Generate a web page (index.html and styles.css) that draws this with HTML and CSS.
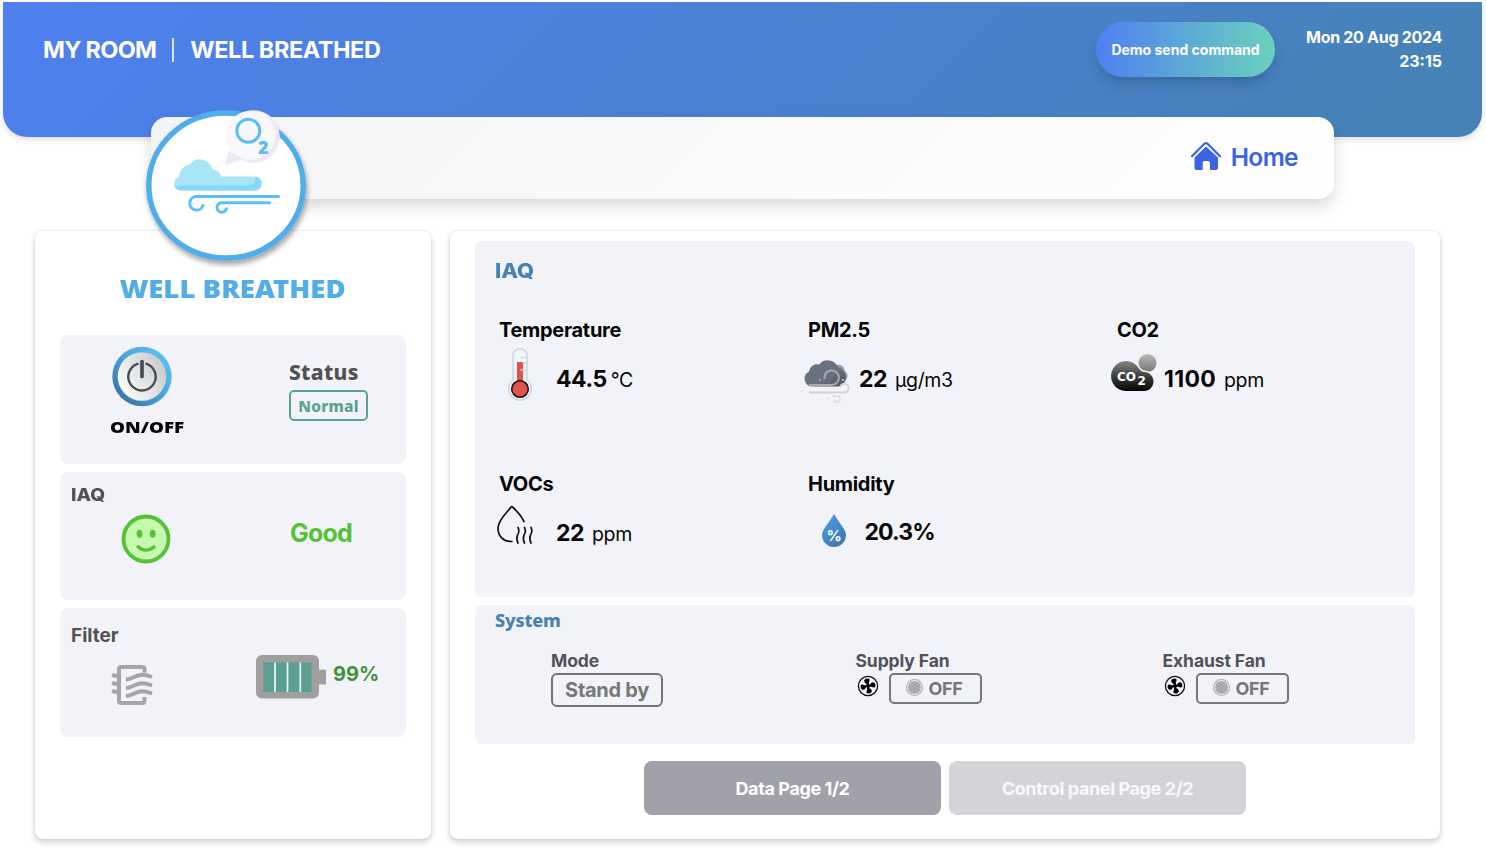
FILE: index.html
```html
<!DOCTYPE html>
<html lang="en">
<head>
<meta charset="utf-8">
<title>Well Breathed</title>
<link rel="stylesheet" href="styles.css">
</head>
<body>
<header class="top">
  <div class="crumbs"><span class="crumb-room">MY ROOM</span><i class="crumb-sep"></i><span class="crumb-page">WELL BREATHED</span></div>
  <button class="demo"><span>Demo send command</span></button>
  <div class="clock"><div>Mon 20 Aug 2024</div><div class="time">23:15</div></div>
</header>

<nav class="subbar">
  <svg class="logo" viewBox="0 0 180 170">
    <defs>
      <filter id="drop" x="-10%" y="-10%" width="120%" height="125%"><feDropShadow dx="1.5" dy="4" stdDeviation="2.5" flood-opacity=".35"/></filter>
    </defs>
    <g transform="translate(10 11)">
      <ellipse cx="80" cy="75.500" rx="77.2" ry="72.5" fill="#fff" stroke="#50ade9" stroke-width="5.5" filter="url(#drop)"/>
      <path d="M83 40L79 54.500L96 50Z" fill="#ece8f9"/>
      <circle cx="107.5" cy="26.500" r="26.2" fill="#ece8f9"/>
      <circle cx="105" cy="25.2" r="24.5" fill="#f8f7fa"/>
      <circle cx="102.3" cy="20.700" r="11.5" fill="none" stroke="#5bbdf4" stroke-width="3"/>
      <text x="112" y="43.500" class="logo-two">2</text>
      <path d="M34 80.500a7 7 0 0 1-1-13.500A13 13 0 0 1 43.500 54.500A13 13 0 0 1 66.500 59.500A8.500 8.500 0 0 1 75 66.500H109a7 7 0 0 1 0 14Z" fill="#a9e5f8"/>
      <path d="M28 75.500H102Q110 75 109.500 66.500A7.100 7.100 0 0 1 109 80.500H35Q30.500 80.500 28 75.500Z" fill="#85d8f7"/>
      <path d="M132.500 86.500H50.500a6.800 6.800 0 1 0 6.500 9M123.500 92.700H75.500a4.800 4.800 0 1 0 5 6" fill="none" stroke="#5bc0f7" stroke-width="3" stroke-linecap="round"/>
    </g>
  </svg>
  <a class="home">
    <svg viewBox="0 0 32 30" width="32" height="30"><path d="M2 15.200L14.400 2.800Q16 1.400 17.600 2.800L30 15.200" fill="none" stroke="#3b63e3" stroke-width="2.200" stroke-linecap="round"/><path d="M4.500 16.500L16 5.500L28 16.500V27Q28 29 26 29H20V22Q20 20 18 20H14.500Q12.700 20 12.700 22V29H6.500Q4.500 29 4.500 27Z" fill="#3b63e3"/></svg>
    <span>Home</span>
  </a>
</nav>

<main class="cards">
  <section class="card side">
    <h1><span>WELL BREATHED</span></h1>
    <div class="box power-box">
      <div class="power">
        <svg viewBox="0 0 64 60" width="64" height="60">
          <defs><linearGradient id="ring" x1="0" y1="1" x2="1" y2="0"><stop offset="0" stop-color="#33669b"/><stop offset=".55" stop-color="#49a9dd"/><stop offset="1" stop-color="#60c9f5"/></linearGradient><linearGradient id="face" x1="0" y1=".8" x2="1" y2=".2"><stop offset="0" stop-color="#fff"/><stop offset="1" stop-color="#c6c7ca"/></linearGradient></defs>
          <circle cx="32" cy="30.500" r="29.700" fill="url(#ring)"/><circle cx="32" cy="30.500" r="24.300" fill="url(#face)"/>
          <path d="M36.500 17.800a13.700 13.700 0 1 1-9 0" fill="none" stroke="#474d54" stroke-width="2.400" stroke-linecap="round"/><path d="M32 15.500V30.500" stroke="#474d54" stroke-width="3.700" stroke-linecap="round"/>
        </svg>
        <b>ON/OFF</b>
      </div>
      <div class="status"><b>Status</b><span class="tag"><em>Normal</em></span></div>
    </div>
    <div class="box air-box">
      <h2>IAQ</h2>
      <div class="row">
        <svg viewBox="0 0 50 50" width="50" height="50"><circle cx="25" cy="25" r="22.500" fill="#c5f9ad" stroke="#55c137" stroke-width="3.800"/><ellipse cx="18.500" cy="19.800" rx="2.900" ry="4" fill="#55c137"/><ellipse cx="31.700" cy="19.800" rx="2.900" ry="4" fill="#55c137"/><path d="M17 32.700Q25 39.500 33 32.700" fill="none" stroke="#55c137" stroke-width="3.300" stroke-linecap="round"/></svg>
        <b class="good">Good</b>
      </div>
    </div>
    <div class="box filter-box">
      <h2>Filter</h2>
      <div class="row">
        <svg class="filter" viewBox="0 0 42 42" width="42" height="42" fill="none" stroke="#a6a6a8" stroke-width="4"><path d="M33.500 8.500V5Q33.500 3 31.500 3H10Q8 3 8 5V37Q8 39 10 39H31.500Q33.500 39 33.500 37V33"/><path d="M1 11q3 1 6 1M1 19q3 1 6 1M1 27q3 1 6 1M15 15.500c9 0 10-8.500 26-2.500M15 24c9 0 10-8.500 26-2.500M15 32c9 0 10-8.500 26-2.500"/></svg>
        <svg class="battery" viewBox="0 0 70 44" width="70" height="44"><rect width="63" height="43.500" rx="6" fill="#9f9f9f"/><path d="M62 14.700h8v14.800h-8z" fill="#9f9f9f"/><path d="M7.500 7.500h48v29.500h-48z" fill="#59a092"/><path d="M19 7.500v29.500M31.500 7.500v29.500M44.300 7.500v29.500" stroke="#eef5f5" stroke-width="1.700"/></svg>
        <b class="pct">99%</b>
      </div>
    </div>
  </section>

  <section class="card main">
    <div class="panel iaq">
      <h3><span>IAQ</span></h3>
      <div class="metrics">
        <div class="metric">
          <h4>Temperature</h4>
          <div class="reading m-temp">
            <svg viewBox="0 0 26 56" width="26" height="56"><path d="M6 34V9.500a7 7 0 0 1 14 0V34a11.300 11.300 0 1 1-14 0Z" fill="#f1f4f8" stroke="#cbd5e2" stroke-width="1.500"/><path d="M10 16h6v23h-6z" fill="#e0524e"/><circle cx="13" cy="43" r="8.300" fill="#e0524e" stroke="#111" stroke-width="1.500"/><path d="M13.500 11.500h6M15.500 17h4M13.500 24h6" stroke="#cbd5e2" stroke-width="1.500"/></svg>
            <b>44.5</b><span>°C</span>
          </div>
        </div>
        <div class="metric">
          <h4>PM2.5</h4>
          <div class="reading m-pm">
            <svg viewBox="0 0 48 44" width="48" height="44">
              <defs><linearGradient id="cg" x1="0" y1="0" x2="1" y2="1"><stop offset="0" stop-color="#6c7382"/><stop offset=".6" stop-color="#686f80"/><stop offset="1" stop-color="#484f61"/></linearGradient><linearGradient id="cs"><stop offset="0" stop-color="#777e90"/><stop offset="1" stop-color="#abb0bd"/></linearGradient></defs>
              <path d="M31 6a7 7 0 0 1 11 5a5.400 5.400 0 0 1 0 9.500H30Z" fill="url(#cs)"/>
              <path d="M8 26.500A8 8 0 0 1 6 11.500A8 8 0 0 1 16 4.500A11 11 0 0 1 35 7.500A9.800 9.800 0 0 1 36 26.500Z" fill="url(#cg)"/>
              <path d="M21.500 19a7.300 7.300 0 1 1 7.500 6H6" fill="none" stroke="#aaa9ac" stroke-width="2"/>
              <path d="M37 27a4.400 4.400 0 1 1 4 5.500H6" fill="none" stroke="#d2d2d3" stroke-width="1.800"/>
              <path d="M29 36h5.500a3 3 0 1 1-3.500 3.500" fill="none" stroke="#dedee0" stroke-width="1.700"/>
              <circle cx="17" cy="20" r="1" fill="#bbb"/><circle cx="40" cy="20" r="1" fill="#ddd"/><circle cx="25" cy="38" r="1" fill="#dcdcde"/>
            </svg>
            <b>22</b><span>µg/m3</span>
          </div>
        </div>
        <div class="metric">
          <h4>CO2</h4>
          <div class="reading m-co">
            <svg viewBox="0 0 46 38" width="46" height="38"><defs><linearGradient id="co" x1="0" y1="0" x2="0" y2="1"><stop offset="0" stop-color="#858585"/><stop offset=".5" stop-color="#3f3f3f"/><stop offset="1" stop-color="#050505"/></linearGradient><linearGradient id="co3" x1="0" y1="0" x2="0" y2="1"><stop offset="0" stop-color="#b9b9b9"/><stop offset="1" stop-color="#777"/></linearGradient></defs><circle cx="36.500" cy="9" r="9" fill="url(#co3)"/><path d="M15 37A15 15 0 1 1 28 14.500Q30 18 34 18A9.500 9.500 0 0 1 32 37Z" fill="url(#co)" stroke="#f2f3f8" stroke-width="3" paint-order="stroke"/><text x="6" y="27" class="co-text">CO</text><text x="26.500" y="31.300" class="co-two">2</text></svg>
            <b>1100</b><span>ppm</span>
          </div>
        </div>
        <div class="metric">
          <h4>VOCs</h4>
          <div class="reading m-voc">
            <svg viewBox="0 0 38 40" width="38" height="40" fill="none" stroke="#111" stroke-width="1.700" stroke-linecap="round"><path d="M16 36.500C7 36.500 2 31 2 23.500C2 14 12 7 15 2Q16 1.300 17 2.500Q24 8.500 28 16.500"/><path d="M22 22.500q2 4-.5 7.500q-1.500 4 .5 8M28.500 22.500q2 4-.5 7.500q-1.500 4 .5 8M35 22.500q2 4-.5 7.500q-1.500 4 .5 8"/></svg>
            <b>22</b><span>ppm</span>
          </div>
        </div>
        <div class="metric">
          <h4>Humidity</h4>
          <div class="reading m-hum">
            <svg viewBox="0 0 26 34" width="26" height="34"><defs><linearGradient id="dr" x1="0" y1="0" x2=".6" y2="1"><stop offset=".4" stop-color="#4b91d3"/><stop offset="1" stop-color="#3e79ae"/></linearGradient></defs><path d="M13 0Q16 5 21 12C23 15 25 18 25 21A12 12 0 0 1 1 21C1 18 3 15 5 12Q10 5 13 0Z" fill="url(#dr)"/><text x="13" y="26.500" class="drop-pct">%</text></svg>
            <b>20.3%</b>
          </div>
        </div>
      </div>
    </div>
    <div class="panel system">
      <h3><span>System</span></h3>
      <div class="controls">
        <div class="mode"><label>Mode</label><button class="standby">Stand by</button></div>
        <div class="fan"><label>Supply Fan</label>
          <div class="fan-row"><svg viewBox="0 0 22 22" width="22" height="22"><circle cx="11" cy="11" r="9.600" fill="none" stroke="#111" stroke-width="1.300"/><g id="blades" transform="rotate(-8 11 11)"><path id="bl" d="M10.200 10.500Q10.300 8.500 8.500 7.600Q6.800 4.300 10 3.600Q14.200 3.300 13.200 6Q11.900 7.500 12.200 10.500Z"/><use href="#bl" transform="rotate(90 11 11)"/><use href="#bl" transform="rotate(180 11 11)"/><use href="#bl" transform="rotate(270 11 11)"/><circle cx="11" cy="11" r="2"/></g></svg><button class="off"><i></i>OFF</button></div></div>
        <div class="fan"><label>Exhaust Fan</label>
          <div class="fan-row"><svg viewBox="0 0 22 22" width="22" height="22"><circle cx="11" cy="11" r="9.600" fill="none" stroke="#111" stroke-width="1.300"/><use href="#blades"/></svg><button class="off"><i></i>OFF</button></div></div>
      </div>
    </div>
    <div class="pager"><button class="page current">Data Page 1/2</button><button class="page">Control panel Page 2/2</button></div>
  </section>
</main>
</body>
</html>
```
FILE: styles.css
```css
* { box-sizing: border-box; }
body { margin: 0; padding: 2px 4px 0 3px; height: 854px; overflow: hidden; background: #fff; font-family: Inter, "Liberation Sans", sans-serif; color: #060606; }
h1, h2, h3, h4 { margin: 0; }
button { font-family: inherit; padding: 0; margin: 0; background: none; border: 0; }
svg { display: block; flex: none; overflow: visible; }
b { font-weight: 700; }

.top { height: 135px; display: flex; align-items: flex-start; padding: 20px 40px 0; color: #fff; border-radius: 0 0 24px 24px; background: linear-gradient(135deg, #4e80f0 0%, #4682b4 100%); box-shadow: 0 3px 6px rgba(0,0,0,.12); }
.crumbs { display: flex; align-items: center; height: 55px; font-size: 23.500px; font-weight: 700; white-space: nowrap; }
.crumb-room { letter-spacing: -.7px; }
.crumb-page { letter-spacing: -.45px; }
.crumb-sep { width: 2px; height: 24px; margin: 0 16px 0 16px; background: #d7e2fa; }
.demo { width: 179px; height: 55px; margin-left: auto; border-radius: 28px; color: #fff; font-size: 14px; font-weight: 700; background: linear-gradient(90deg, #4f80f1, #6ad1bd); box-shadow: 0 8px 12px -2px rgba(20,50,90,.3); white-space: nowrap; }
.clock { width: 167px; padding-top: 3px; text-align: right; font-size: 16px; line-height: 24px; font-weight: 700; letter-spacing: -.3px; white-space: nowrap; }
.time { letter-spacing: 0; }

.subbar { position: relative; width: 1183px; height: 82px; margin: -20px 0 0 148px; padding-right: 36px; display: flex; align-items: center; justify-content: flex-end; border-radius: 16px; background: linear-gradient(135deg, #f3f4f6, #fff); box-shadow: 0 8px 16px rgba(0,0,0,.15); z-index: 2; }
.logo { position: absolute; left: -15px; top: -18px; width: 180px; height: 170px; }
.logo-two { font: 800 18px "Open Sans", sans-serif; fill: #5bbdf4; }
.home { display: flex; align-items: center; gap: 9px; color: #3b63e3; font-size: 24.500px; font-weight: 600; letter-spacing: -.6px; line-height: 30px; margin-top: -3px; }
.home svg { margin-top: -2px; }

.cards { display: flex; gap: 19px; margin: 32px 0 0 32px; }
.card { height: 608px; border-radius: 8px; background: #fff; box-shadow: 0 3px 6px rgba(0,0,0,.2), 0 0 3px rgba(0,0,0,.08); }
.side { width: 396px; padding: 42px 25px 0; }
.side h1 { height: 30px; margin-bottom: 32px; font: 900 25.500px/30px "Noto Sans", sans-serif; color: #50ade9; text-align: center; white-space: nowrap; }
.side h1 span { display: inline-block; transform: scaleX(1.08); }
.box { height: 128.500px; margin-bottom: 8px; border-radius: 8px; background: #f2f3f8; }
.side h2 { font-size: 19px; font-weight: 700; letter-spacing: 0; color: #525252; line-height: 24px; }
.power-box { display: flex; padding: 11px 0 0 50px; }
.power { width: 75px; }
.power svg { margin-bottom: 9px; }
.power b { display: block; font: 900 16.500px/24px "Noto Sans", sans-serif; white-space: nowrap; transform: scaleX(1.14); transform-origin: 0 50%; }
.status { margin: 13px 0 0 104px; }
.status b { display: block; height: 31px; font: 800 21px/27px "Noto Sans", sans-serif; letter-spacing: .3px; color: #525252; }
.tag { display: flex; width: 79px; height: 31px; align-items: center; justify-content: center; border: 2px solid #57a292; border-radius: 5px; color: #57a292; font: 800 15.500px/20px "Noto Sans", sans-serif; }
.tag em { font-style: normal; letter-spacing: .2px; }
.row { display: flex; }
.air-box { padding: 11px 0 0 11px; }
.air-box h2 { width: 40px; font: 800 17px/24px Inter, sans-serif; transform: scaleX(1.12); transform-origin: 0 50%; }
.air-box .row { margin: 7px 0 0 50px; }
.good { margin: 4px 0 0 119px; color: #55c137; font-size: 25px; line-height: 30px; letter-spacing: -.8px; }
.filter-box { padding: 16px 0 0 11px; }
.filter-box .row { margin: 7px 0 0 40px; }
.filter { margin-top: 9px; }
.battery { margin: -.5px 0 0 102.500px; }
.pct { margin: 7px 0 0 7.500px; color: #3e9238; font-size: 20px; line-height: 24px; }

.main { width: 990px; padding: 10px 25px 0; }
.panel { border-radius: 6px; background: #f2f3f8; padding-left: 20px; }
.panel h3 { color: #4682b4; }
.iaq { height: 356px; padding-top: 18px; margin-bottom: 8px; }
.iaq h3 { font-size: 19.500px; line-height: 24px; font-weight: 800; }
.iaq h3 span { display: inline-block; transform: scaleX(1.12); transform-origin: 0 50%; }
.metrics { display: grid; grid-template-columns: repeat(3, 309px); grid-auto-rows: 154px; margin: 33px 0 0 4px; }
.metric { padding-top: 1px; }
.metric h4 { font-size: 20px; line-height: 26px; font-weight: 700; letter-spacing: -.3px; }
.reading { display: flex; font-size: 19.500px; line-height: 26px; letter-spacing: -.4px; white-space: nowrap; }
.reading b { font-size: 23px; margin-top: 23px; letter-spacing: -.45px; }
.reading span { margin-top: 24px; }
.m-temp svg { margin: 3px 23px 0 8px; }
.m-temp span { margin-left: 4px; }
.m-pm svg { margin: 17px 8px 0 -5px; }
.m-pm span, .m-co span, .m-voc span { margin-left: 8px; }
.m-co svg { margin: 10.500px 7.500px 0 -6.500px; }
.m-co b { letter-spacing: .3px; }
.m-voc svg { margin: 8px 22px 0 -3px; }
.m-hum svg { margin: 17px 18px 0 12.500px; }
.m-hum b { margin-top: 22px; letter-spacing: -.9px; }
.co-text { font: 800 12px "DejaVu Sans", sans-serif; fill: #fff; letter-spacing: 0; }
.co-two { font: 800 12px "DejaVu Sans", sans-serif; fill: #fff; }
.drop-pct { font: 700 15px Inter, sans-serif; fill: #fff; text-anchor: middle; letter-spacing: 0; }

.system { height: 139px; padding-top: 3px; }
.system h3 { font: 800 18px/24px "Noto Sans", sans-serif; letter-spacing: -.15px; }
.controls { display: flex; margin-left: 56px; padding-top: 17px; }
.controls label { display: block; height: 24px; font-size: 17.500px; line-height: 24px; font-weight: 700; color: #52525b; letter-spacing: -.1px; white-space: nowrap; }
.mode { flex: none; width: 304.500px; }
.fan { flex: none; width: 307px; }
.standby { width: 112px; height: 34px; border: 2px solid #737373; border-radius: 6px; color: #777; font-size: 20px; font-weight: 700; letter-spacing: -.3px; }
.fan-row { display: flex; align-items: flex-start; gap: 10px; margin-left: 1px; }
.fan-row svg { margin-top: 2px; }
.off { width: 93px; height: 31px; display: flex; align-items: center; justify-content: center; gap: 6px; border: 2px solid #777; border-radius: 5px; color: #777; font-size: 18px; font-weight: 700; letter-spacing: -.3px; }
.off i { width: 15px; height: 15px; margin-top: -2px; border-radius: 50%; background: #aaa; border: 1.500px solid #f2f3f8; box-shadow: 0 0 0 1px #aaa; background-clip: padding-box; }
.pager { display: flex; justify-content: center; gap: 8px; margin-top: 17px; }
.page { width: 297px; height: 54px; border-radius: 8px; background: #d4d4d8; color: #f8f8f8; font-size: 18px; font-weight: 700; letter-spacing: -.4px; }
.current { background: #a1a1aa; color: #fff; }
```
